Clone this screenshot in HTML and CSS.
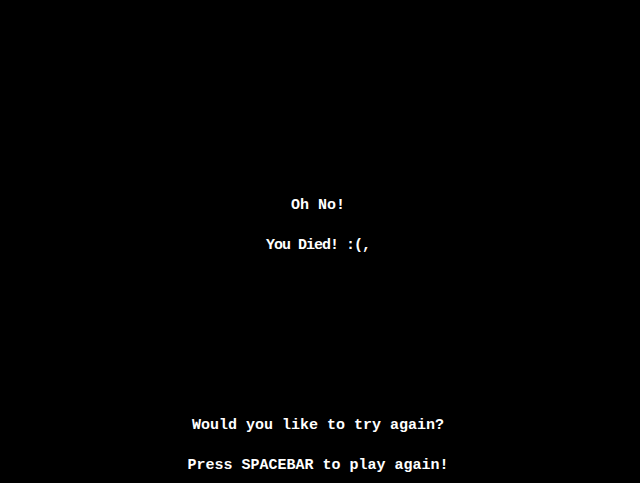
FILE: index.html
```html
<!DOCTYPE html>
<html>
<head>
<meta charset="utf-8">
<link rel="stylesheet" href="styles.css">
</head>
<body>
<main class="screen">
  <section class="block top">
    <p class="line">Oh No!</p>
    <p class="line tight">You Died! :(,</p>
  </section>
  <section class="block bottom">
    <p class="line">Would you like to try again?</p>
    <p class="line">Press SPACEBAR to play again!</p>
  </section>
</main>
</body>
</html>
```
FILE: styles.css
```css
html, body {
  margin: 0;
  padding: 0;
  background: #000;
}
.screen {
  width: 636px;
  height: 483px;
  display: flex;
  flex-direction: column;
  align-items: center;
  padding-top: 186px;
  box-sizing: border-box;
  overflow: hidden;
  font-family: "Liberation Mono", monospace;
  font-weight: bold;
  font-size: 15px;
  color: #fff;
}
.block {
  display: flex;
  flex-direction: column;
  align-items: center;
}
.bottom {
  margin-top: 140px;
}
.line {
  margin: 0;
  line-height: 40px;
  white-space: pre;
}
.tight {
  letter-spacing: -1px;
}
```
